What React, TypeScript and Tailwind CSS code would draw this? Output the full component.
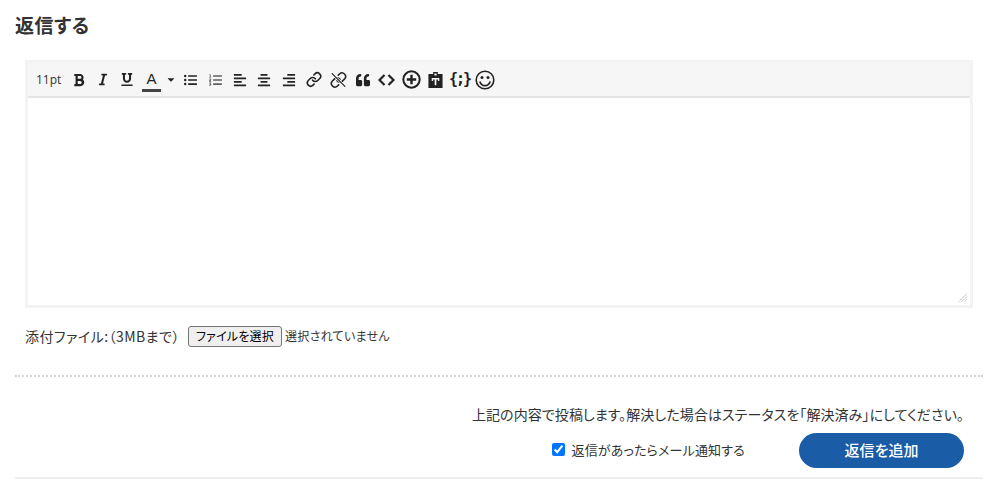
import React from "react";
import { FaBold, FaItalic, FaUnderline, FaListUl, FaListOl, FaAlignLeft, FaAlignCenter, FaAlignRight, FaQuoteLeft, FaCaretDown } from "react-icons/fa";
import { Link } from "lucide-react";

const T = ({ children, className = "" }: { children: React.ReactNode; className?: string }) => (
  <span className={`flex items-center justify-center text-[#222222] shrink-0 ${className}`}>{children}</span>
);

export default function App() {
  return (
    <div className="w-[1000px] h-[488px] bg-white overflow-hidden text-[#333333] font-['Noto_Sans_CJK_JP','Noto_Sans',sans-serif] [font-feature-settings:'palt']">
      <div className="pl-[15px] pr-[17px] pt-[11px]">
        <h2 className="text-[19px] leading-[28px] font-bold tracking-[0.5px] text-[#333333]">返信する</h2>
        <div className="mt-[21px] ml-[10px] mr-[10px] border-[3px] border-[#f3f3f3] h-[248px] flex flex-col">
          <div className="h-[35px] bg-[#f5f6f5] border-b-2 border-[#e4e4e4] flex items-center pl-[8px] shrink-0">
            <span className="w-[36px] text-[#333333] font-['Open_Sans',sans-serif] text-[12px] shrink-0">11pt</span>
            <T className="w-[12px] ml-[1px]"><FaBold size={14} /></T>
            <T className="w-[12px] ml-[12px]"><FaItalic size={13} /></T>
            <T className="w-[12px] ml-[12px]"><FaUnderline size={13} /></T>
            <span className="w-[19px] ml-[9px] h-[24px] flex flex-col items-center justify-end text-[#222222] shrink-0">
              <span className="text-[15px] leading-[18px] font-['Liberation_Sans',sans-serif]">A</span>
              <span className="w-[19px] h-[3px] bg-[#444444] mt-[1px]"></span>
            </span>
            <T className="w-[8px] ml-[6px]"><FaCaretDown size={11} /></T>
            <T className="w-[13px] ml-[9px]"><FaListUl size={14} /></T>
            <T className="w-[13px] ml-[12px] opacity-70"><FaListOl size={14} /></T>
            <T className="w-[14px] ml-[11px]"><FaAlignLeft size={14} /></T>
            <T className="w-[14px] ml-[10px]"><FaAlignCenter size={14} /></T>
            <T className="w-[14px] ml-[11px]"><FaAlignRight size={14} /></T>
            <T className="w-[16px] ml-[10px]"><Link size={17} strokeWidth={2.4} /></T>
            <T className="w-[17px] ml-[8px]">
              <svg width="18" height="18" viewBox="0 0 24 24" fill="none" stroke="#222222" strokeWidth="2.2" strokeLinecap="round" strokeLinejoin="round">
                <path d="M10 13a5 5 0 0 0 7.54.54l3-3a5 5 0 0 0-7.07-7.07l-1.72 1.71" />
                <path d="M14 11a5 5 0 0 0-7.54-.54l-3 3a5 5 0 0 0 7.07 7.07l1.71-1.71" />
                <path d="M3 3l18 18" stroke="#ffffff" strokeWidth="3.4" />
                <path d="M3 3l18 18" strokeWidth="1.8" />
              </svg>
            </T>
            <T className="w-[15px] ml-[8px]"><FaQuoteLeft size={14} /></T>
            <T className="w-[17px] ml-[8px]">
              <svg width="17" height="12" viewBox="0 0 17 12" fill="none" stroke="#222222" strokeWidth="2.2">
                <path d="M6.500 1 1.500 6l5 5M10.500 1l5 5-5 5" />
              </svg>
            </T>
            <T className="w-[20px] ml-[6px]">
              <svg width="19" height="19" viewBox="0 0 19 19" fill="none" stroke="#222222">
                <circle cx="9.5" cy="9.5" r="8.2" strokeWidth="2" />
                <path d="M9.5 4.800v9.400M4.800 9.500h9.400" strokeWidth="2.4" />
              </svg>
            </T>
            <T className="w-[16px] ml-[6px]">
              <svg width="15" height="16" viewBox="0 0 15 17">
                <path fillRule="evenodd" fill="#222222" d="M5 0h5v2h5v15H0V2h5zM6.300 1.600v2h2.400v-2zM3.500 6.500v3h1.400V8h1.700v6.200h1.800V8h1.700v1.500h1.400v-3z" />
              </svg>
            </T>
            <span className="w-[20px] ml-[6px] text-[15px] leading-none font-bold text-[#222222] text-center font-['DejaVu_Sans_Mono',monospace] tracking-[-2px] shrink-0">{"{;}"}</span>
            <T className="w-[20px] ml-[6px]">
              <svg width="20" height="20" viewBox="0 0 20 20" fill="none" stroke="#222222">
                <circle cx="10" cy="10" r="8.8" strokeWidth="1.6" />
                <circle cx="7" cy="7.6" r="1.5" fill="#222222" stroke="none" />
                <circle cx="13" cy="7.6" r="1.5" fill="#222222" stroke="none" />
                <path d="M4.800 11.400c1 3 3 4.200 5.200 4.200s4.200-1.200 5.200-4.200" strokeWidth="1.7" />
              </svg>
            </T>
          </div>
          <div className="flex-1 flex items-end justify-end pr-[3px] pb-[3px]">
            <svg width="9" height="9" viewBox="0 0 9 9" stroke="#9a9a9a" strokeWidth="1" strokeDasharray="1.4 1">
              <path d="M8.500 1 1 8.500M8.500 4 4 8.500M8.500 6.600 6.600 8.500" />
            </svg>
          </div>
        </div>
        <div className="mt-[16px] ml-[10px] flex items-center h-[24px]">
          <span className="w-[163px] text-[14px] tracking-[0.45px]">添付ファイル:（3MBまで）</span>
          <button className="w-[94px] h-[21px] bg-[#efefef] border border-[#767676] rounded-[3px] text-[12px] tracking-[0.2px] leading-none text-black">ファイルを選択</button>
          <span className="ml-[3px] text-[12px] tracking-[0.3px]">選択されていません</span>
        </div>
        <div className="mt-[27px] border-t-2 border-dotted border-[#d4d4d4]"></div>
        <div className="flex flex-col items-end pr-[19px] mt-[27px]">
          <p className="text-[14px] leading-[20px] tracking-[0.08px] text-[#333333]">上記の内容で投稿します。解決した場合はステータスを「解決済み」にしてください。</p>
          <div className="flex items-center mt-[9px]">
            <div className="flex items-center mb-[2px]">
              <input type="checkbox" defaultChecked className="w-[13px] h-[13px] accent-[#0075ff]" />
              <span className="ml-[6px] text-[13px] tracking-[0.17px]">返信があったらメール通知する</span>
            </div>
            <button className="ml-[54px] w-[165px] h-[35px] rounded-full bg-[#1a5ca5] text-white text-[15px] font-medium">返信を追加</button>
          </div>
        </div>
        <div className="mt-[9px] border-t-2 border-[#eeeeee]"></div>
      </div>
    </div>
  );
}
